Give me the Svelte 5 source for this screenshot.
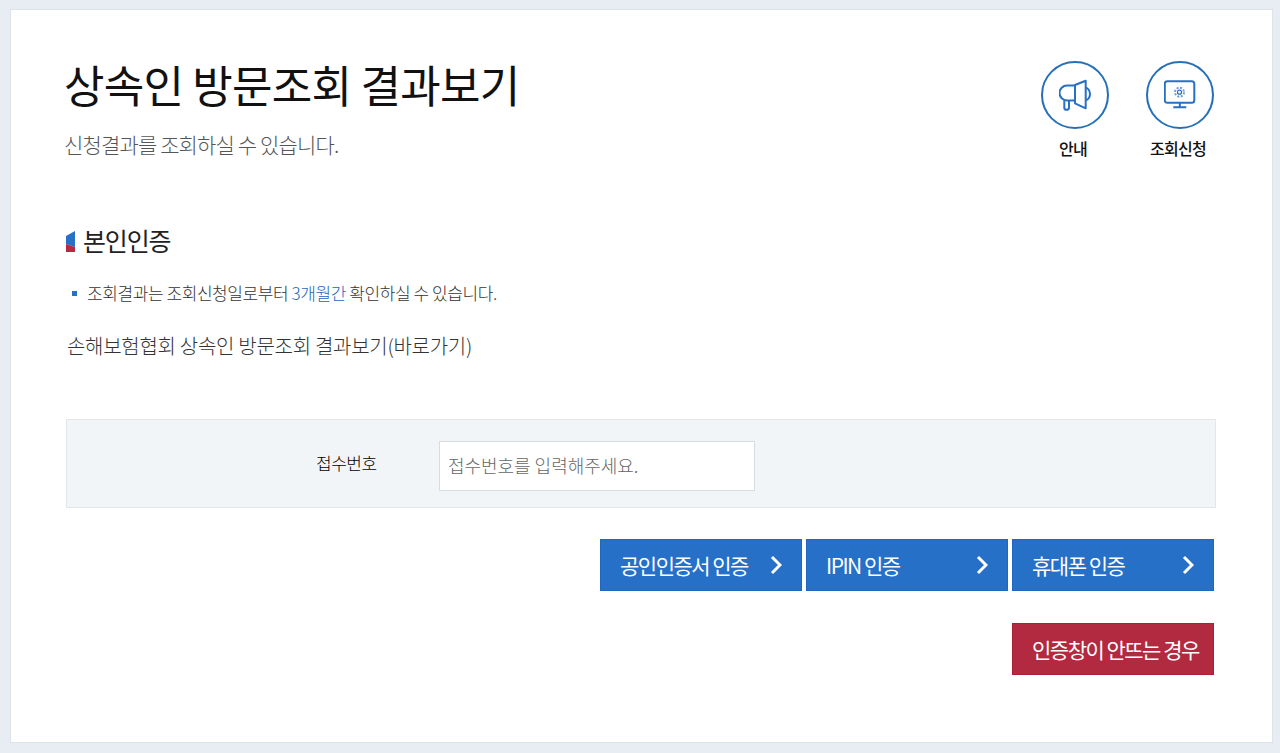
<script>
	const authButtons = ['공인인증서 인증', 'IPIN 인증', '휴대폰 인증'];
</script>

<div class="page">
	<main class="panel">
		<header class="head">
			<div>
				<h1>상속인 방문조회 결과보기</h1>
				<p class="sub">신청결과를 조회하실 수 있습니다.</p>
			</div>
			<nav class="links">
				<a class="link" href="#guide">
					<span class="circle">
						<svg width="32" height="32" viewBox="0 0 32 32" fill="none" stroke="#2770c4" stroke-width="2" stroke-linejoin="round">
							<path d="M26.700 9a4.300 6 0 0 1 0 12" />
							<path d="M26.700 1.700v27.600L16 24.300V6z" />
							<path d="M16 6.500H8a7.500 7.500 0 0 0 0 15h8" />
							<path d="M5.300 21.500v7a2.350 2.350 0 0 0 4.700 0v-7" />
						</svg>
					</span>
					<span class="link-label">안내</span>
				</a>
				<a class="link" href="#apply">
					<span class="circle">
						<svg width="32" height="32" viewBox="0 0 32 32" fill="none" stroke="#2770c4" stroke-width="2" stroke-linejoin="round">
							<rect x="0.800" y="2.200" width="29.500" height="21.500" rx="2.500" />
							<path d="M15.800 23.700v4.600M9.300 28.300h13" />
							<circle cx="15.500" cy="13.200" r="2" stroke-width="1.200" />
							<circle cx="15.500" cy="13.200" r="4.500" stroke="#6f9fd6" stroke-width="2" stroke-dasharray="2.100 1.430" />
						</svg>
					</span>
					<span class="link-label">조회신청</span>
				</a>
			</nav>
		</header>

		<h2>
			<svg class="mark" width="9" height="21" viewBox="0 0 9 21">
				<path d="M0 5L9 0v16L0 13z" fill="#2770c8" />
				<path d="M0 13l9 3v5H0z" fill="#b52a42" />
			</svg>
			본인인증
		</h2>
		<p class="note"><span class="bullet"></span><span>조회결과는 조회신청일로부터 <em>3개월간</em> 확인하실 수 있습니다.</span></p>
		<p class="shortcut">손해보험협회 상속인 방문조회 결과보기(바로가기)</p>

		<div class="form">
			<label for="receipt">접수번호</label>
			<input id="receipt" type="text" placeholder="접수번호를 입력해주세요." />
		</div>

		<div class="buttons">
			{#each authButtons as text}
				<button class="btn">
					<span>{text}</span>
					<svg width="12" height="20" viewBox="0 0 12 20" fill="none" stroke="#fff" stroke-width="3"><path d="M2 2l8 8-8 8" /></svg>
				</button>
			{/each}
		</div>
		<div class="buttons help">
			<button class="btn red">인증창이 안뜨는 경우</button>
		</div>
	</main>
</div>

<style>
	:global(body) {
		background: #e8edf4;
	}

	.page {
		height: 753px;
		box-sizing: border-box;
		padding: 9px 7px 10px 10px;
		font-family: "Noto Sans CJK KR", "Noto Sans", sans-serif;
		overflow: hidden;
	}

	.panel {
		height: 100%;
		box-sizing: border-box;
		background: #fff;
		border: 1px solid #dfe3e8;
		padding: 0 56px 0 55px;
	}

	.head {
		display: flex;
		justify-content: space-between;
		height: 175px;
	}

	h1 {
		margin: 40px 0 0 -2px;
		font-size: 44px;
		line-height: 68px;
		font-weight: 400;
		letter-spacing: -0.74px;
		color: #111;
	}

	.sub {
		margin: 11px 0 0 -2px;
		font-size: 21px;
		line-height: 30px;
		font-weight: 300;
		letter-spacing: -0.85px;
		color: #555;
	}

	.links {
		display: flex;
		gap: 37px;
		padding-top: 51px;
		margin-right: 2px;
	}

	.link {
		width: 68px;
		display: flex;
		flex-direction: column;
		align-items: center;
		color: #111;
		text-decoration: none;
	}

	.circle {
		width: 68px;
		height: 68px;
		box-sizing: border-box;
		border: 2px solid #2770b8;
		border-radius: 50%;
		display: flex;
		align-items: center;
		justify-content: center;
	}

	.link-label {
		margin: 7px 0 0 -4px;
		font-size: 16px;
		line-height: 24px;
		font-weight: 500;
		letter-spacing: -0.7px;
		white-space: nowrap;
	}

	h2 {
		margin: 37px 0 0;
		display: flex;
		align-items: center;
		gap: 8px;
		font-size: 25px;
		line-height: 36px;
		font-weight: 400;
		letter-spacing: -1.15px;
		color: #222;
	}

	.mark {
		margin-top: 2px;
	}

	.note {
		margin: 23px 0 0 6px;
		display: flex;
		align-items: center;
		font-size: 17px;
		line-height: 24px;
		font-weight: 300;
		letter-spacing: -0.42px;
		color: #333;
	}

	.bullet {
		width: 5px;
		height: 5px;
		background: #2770c4;
		margin-right: 10px;
	}

	.note em {
		font-style: normal;
		color: #1a66c0;
	}

	.shortcut {
		margin: 27px 0 0 1px;
		font-size: 20px;
		line-height: 28px;
		font-weight: 300;
		letter-spacing: -0.28px;
		color: #333;
	}

	.form {
		margin-top: 59px;
		height: 89px;
		box-sizing: border-box;
		background: #f2f5f8;
		border: 1px solid #e4e7ea;
		display: flex;
		align-items: center;
		padding: 4px 0 0 249px;
	}

	.form label {
		width: 123px;
		margin-top: -5px;
		font-size: 17px;
		line-height: 24px;
		font-weight: 300;
		letter-spacing: -0.5px;
		color: #000;
	}

	.form input {
		width: 316px;
		height: 50px;
		box-sizing: border-box;
		border: 1px solid #d8dce0;
		background: #fff;
		padding: 0 8px 2px;
		font: 300 18px "Noto Sans CJK KR", sans-serif;
		letter-spacing: -0.03px;
	}

	.form input::placeholder {
		color: #666;
		opacity: 1;
	}

	.buttons {
		display: flex;
		justify-content: flex-end;
		gap: 4px;
		margin-top: 31px;
		margin-right: 2px;
	}

	.btn {
		width: 202px;
		height: 52px;
		box-sizing: border-box;
		border: 1px solid #1d68c4;
		background: #2770c8;
		color: #fff;
		padding: 0 19px 0 19px;
		display: flex;
		align-items: center;
		justify-content: space-between;
		font: 400 21px "Noto Sans CJK KR", sans-serif;
		letter-spacing: -1.5px;
		white-space: nowrap;
	}

	.red {
		background: #b22a40;
		border-color: #aa1f36;
	}

	.help {
		margin-top: 32px;
	}
</style>
